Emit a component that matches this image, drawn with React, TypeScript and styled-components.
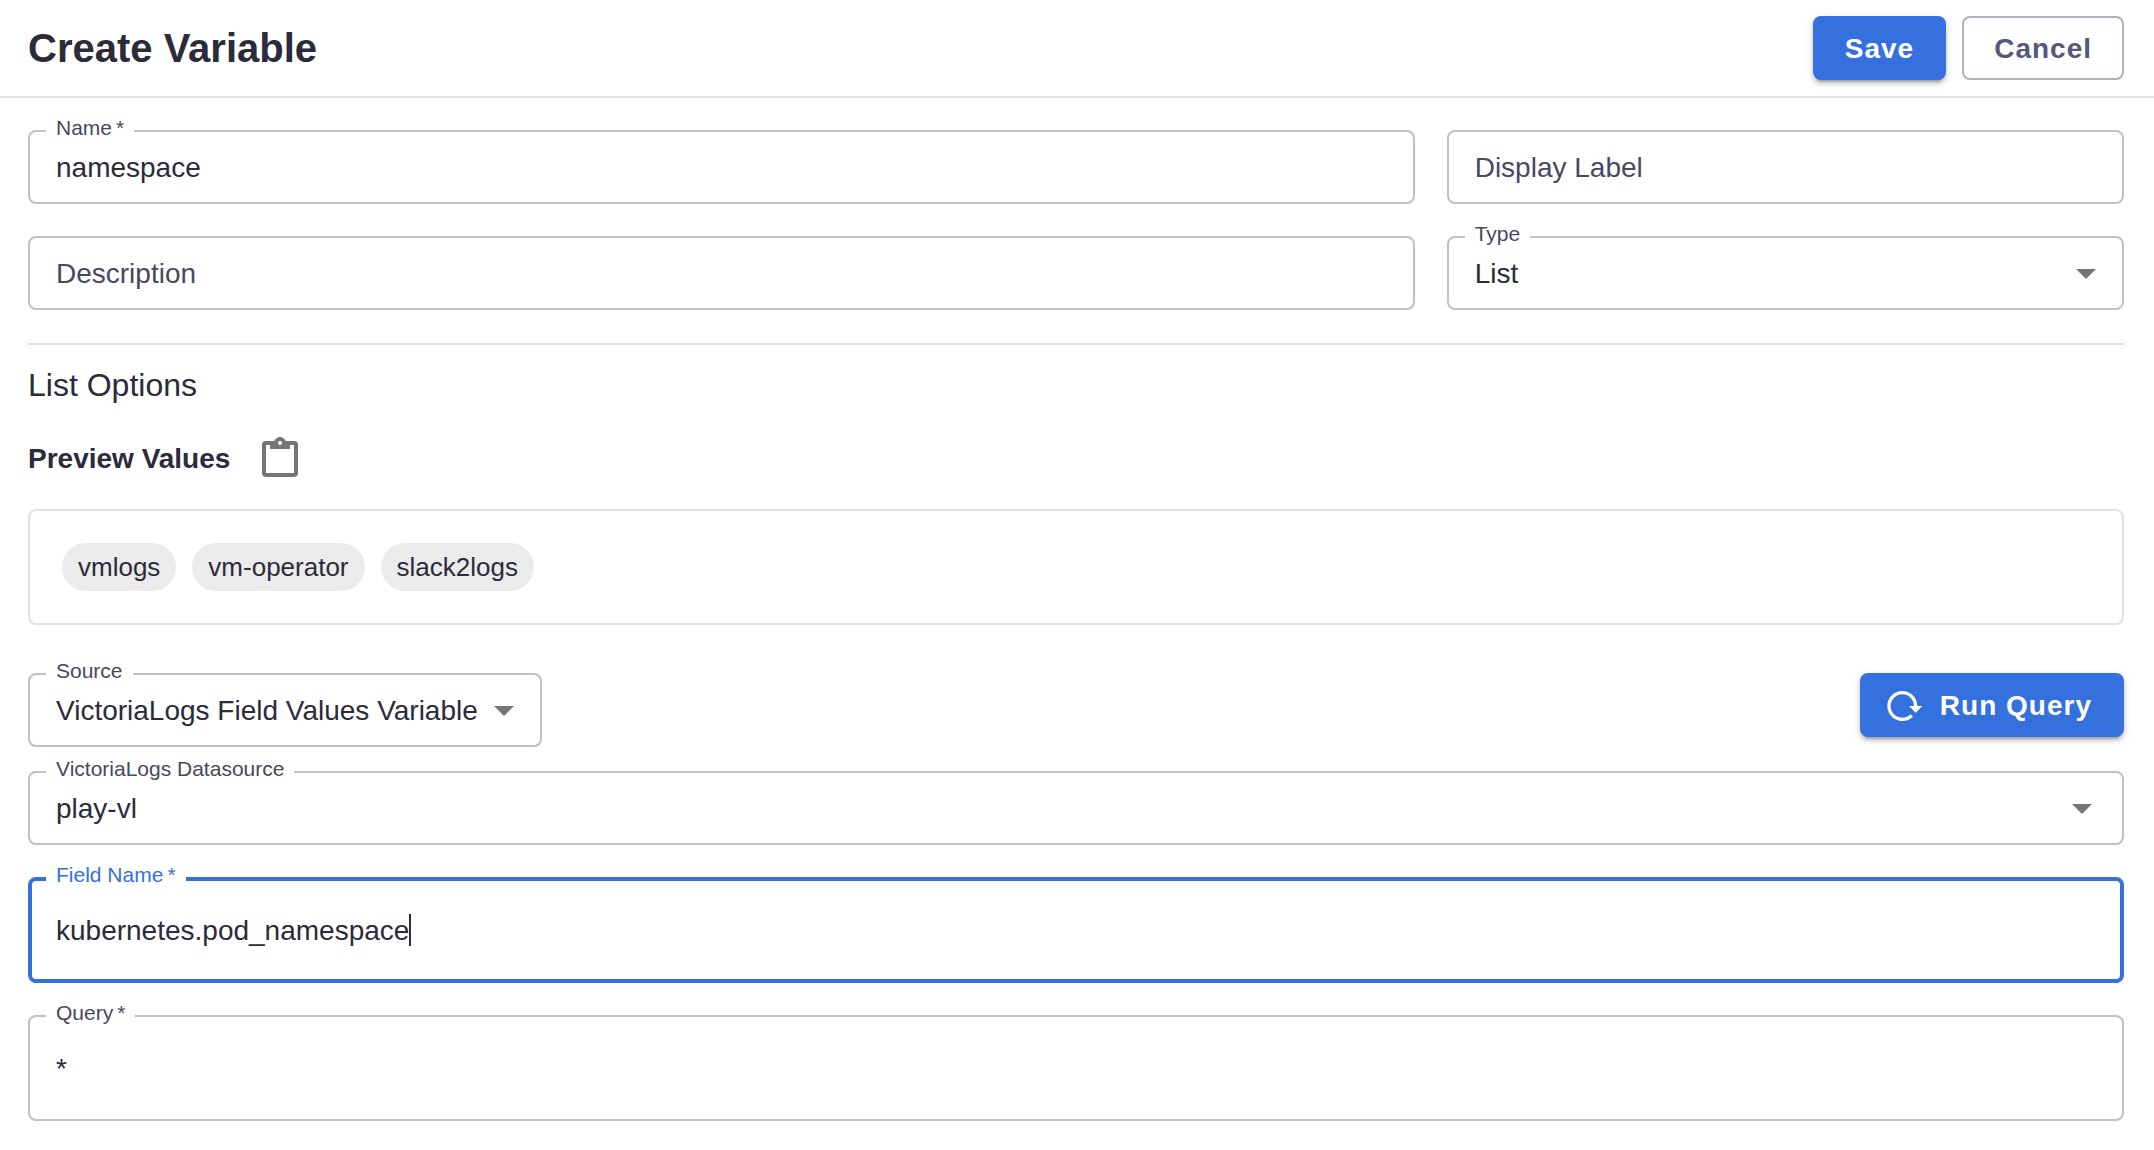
import React, { useId } from 'react';
import styled, { createGlobalStyle } from 'styled-components';

const color = {
  text: '#2b2b3b',
  label: '#484861',
  primary: '#3570df',
  outline: '#c1c1c1',
  divider: '#e2e2e2',
  icon: '#757575',
  chip: '#ebebeb',
  cancelText: '#57577b',
  cancelBorder: '#aeaec6',
};

const GlobalStyle = createGlobalStyle`
  *, *::before, *::after { box-sizing: border-box; }
  body {
    margin: 0;
    background: #fff;
    color: ${color.text};
    font-family: "Liberation Sans", Arial, sans-serif;
    font-size: 28px;
    line-height: 32px;
  }
  button, input, select { font: inherit; color: inherit; }
`;

const Header = styled.header`
  display: flex;
  align-items: center;
  gap: 16px;
  padding: 16px 30px 16px 28px;
  border-bottom: 2px solid ${color.divider};
`;

const Title = styled.h1`
  flex: 1;
  margin: 0;
  font-size: 40px;
  line-height: 48px;
`;

const Button = styled.button<{ $variant: 'contained' | 'outlined' }>`
  display: inline-flex;
  align-items: center;
  gap: 16px;
  height: 64px;
  padding: 2px ${(p) => (p.$variant === 'contained' ? 32 : 30)}px 0;
  border: ${(p) => (p.$variant === 'contained' ? '0' : `2px solid ${color.cancelBorder}`)};
  border-radius: 8px;
  background: ${(p) => (p.$variant === 'contained' ? color.primary : '#fff')};
  color: ${(p) => (p.$variant === 'contained' ? '#fff' : color.cancelText)};
  font-weight: 700;
  letter-spacing: 1px;
  white-space: nowrap;
  box-shadow: ${(p) =>
    p.$variant === 'contained'
      ? '0 6px 2px -4px rgba(0,0,0,.2), 0 4px 4px rgba(0,0,0,.14), 0 2px 10px rgba(0,0,0,.12)'
      : 'none'};
  cursor: pointer;

  svg { margin-left: -8px; }
`;

const Form = styled.form`
  padding: 32px 30px 28px 28px;
`;

const FieldGrid = styled.div`
  display: grid;
  grid-template-columns: repeat(12, 1fr);
  gap: 32px;
`;

const Cell = styled.div<{ $span: number }>`
  grid-column: span ${(p) => p.$span};
`;

const Divider = styled.hr`
  margin: 33px 0 0;
  border: 0;
  border-top: 2px solid ${color.divider};
`;

const SectionTitle = styled.h2`
  margin: 20px 0 0;
  font-size: 32px;
  font-weight: 400;
  line-height: 40px;
`;

const PreviewHeader = styled.div`
  display: flex;
  align-items: center;
  gap: 26px;
  margin-top: 30px;
`;

const PreviewTitle = styled.h3`
  margin: 0;
  font-size: 28px;
  line-height: 32px;
`;

const IconButton = styled.button`
  display: flex;
  padding: 0;
  border: 0;
  background: none;
  color: ${color.icon};
  cursor: pointer;
`;

const ChipList = styled.ul`
  display: flex;
  flex-wrap: wrap;
  gap: 16px;
  margin: 26px 0 48px;
  padding: 32px;
  border: 2px solid ${color.divider};
  border-radius: 8px;
  list-style: none;
`;

const Chip = styled.li`
  padding: 0 16px;
  border-radius: 24px;
  background: ${color.chip};
  font-size: 26px;
  line-height: 48px;
`;

const SourceRow = styled.div`
  display: flex;
  align-items: flex-start;
  justify-content: space-between;
  margin-bottom: 24px;
`;

const Stack = styled.div`
  display: flex;
  flex-direction: column;
  gap: 32px;
`;

const Field = styled.div`
  position: relative;
`;

const Frame = styled.div<{ $tall?: boolean; $focused?: boolean }>`
  display: flex;
  align-items: center;
  height: ${(p) => (p.$tall ? 106 : 74)}px;
  padding: 0 ${(p) => (p.$focused ? 24 : 26)}px;
  border: ${(p) => (p.$focused ? `4px solid ${color.primary}` : `2px solid ${color.outline}`)};
  border-radius: 8px;
`;

const Label = styled.label<{ $focused?: boolean }>`
  position: absolute;
  top: -14px;
  left: 18px;
  padding: 0 10px;
  background: #fff;
  color: ${(p) => (p.$focused ? color.primary : color.label)};
  font-size: 21px;
  line-height: 24px;
`;

const Required = styled.span`
  margin-left: 4px;
`;

const Input = styled.input<{ $fit?: boolean }>`
  ${(p) => (p.$fit ? 'field-sizing: content; caret-color: transparent;' : 'flex: 1; min-width: 0;')}
  height: 40px;
  padding: 2px 0 0;
  border: 0;
  outline: 0;
  background: none;

  &::placeholder { color: ${color.label}; opacity: 1; }
`;

const TextCursor = styled.span`
  width: 2px;
  height: 32px;
  background: ${color.text};
`;

const Select = styled.select<{ $inset: number }>`
  flex: 1;
  height: 70px;
  margin: 0 -26px;
  padding: 2px ${(p) => p.$inset + 34}px 0 26px;
  border: 0;
  outline: 0;
  border-radius: 8px;
  background: none;
  appearance: none;
  cursor: pointer;
`;

const Arrow = styled.svg<{ $inset: number }>`
  position: absolute;
  top: 33px;
  right: ${(p) => p.$inset}px;
  width: 20px;
  height: 10px;
  fill: ${color.icon};
  pointer-events: none;
`;

function TextField(props: {
  label: string;
  value?: string;
  required?: boolean;
  tall?: boolean;
  focused?: boolean;
}) {
  const { label, value, required, tall, focused } = props;
  const id = useId();
  return (
    <Field>
      <Frame $tall={tall} $focused={focused}>
        <Input
          id={id}
          type="text"
          $fit={focused}
          defaultValue={value}
          placeholder={value ? undefined : label}
          aria-label={value ? undefined : label}
          required={required}
        />
        {focused && <TextCursor />}
      </Frame>
      {value && (
        <Label htmlFor={id} $focused={focused}>
          {label}
          {required && <Required>*</Required>}
        </Label>
      )}
    </Field>
  );
}

function SelectField(props: { label: string; value: string; inset?: number }) {
  const { label, value, inset = 28 } = props;
  const id = useId();
  return (
    <Field>
      <Frame>
        <Select id={id} $inset={inset} defaultValue={value}>
          <option>{value}</option>
        </Select>
        <Arrow $inset={inset} viewBox="0 0 20 10" aria-hidden="true">
          <path d="M0 0h20L10 10z" />
        </Arrow>
      </Frame>
      <Label htmlFor={id}>{label}</Label>
    </Field>
  );
}

const ClipboardIcon = () => (
  <svg width="48" height="48" viewBox="0 0 24 24" fill="currentColor" aria-hidden="true">
    <path d="M19,3H14.82C14.4,1.84 13.3,1 12,1C10.7,1 9.6,1.84 9.18,3H5A2,2 0 0,0 3,5V19A2,2 0 0,0 5,21H19A2,2 0 0,0 21,19V5A2,2 0 0,0 19,3M12,3A1,1 0 0,1 13,4A1,1 0 0,1 12,5A1,1 0 0,1 11,4A1,1 0 0,1 12,3M7,7H17V5H19V19H5V5H7V7Z" />
  </svg>
);

const ReloadIcon = () => (
  <svg width="40" height="40" viewBox="0 0 24 24" fill="currentColor" aria-hidden="true">
    <path d="M2 12C2 16.97 6.03 21 11 21C13.39 21 15.68 20.06 17.4 18.4L15.9 16.9C14.63 18.25 12.86 19 11 19C4.76 19 1.64 11.46 6.05 7.05C10.46 2.64 18 5.77 18 12H15L19 16H19.1L23 12H20C20 7.03 15.97 3 11 3C6.03 3 2 7.03 2 12Z" />
  </svg>
);

const previewValues = ['vmlogs', 'vm-operator', 'slack2logs'];

export default function App() {
  return (
    <>
      <GlobalStyle />
      <Header>
        <Title>Create Variable</Title>
        <Button type="submit" form="variable-form" $variant="contained">Save</Button>
        <Button type="button" $variant="outlined">Cancel</Button>
      </Header>
      <Form id="variable-form" onSubmit={(e) => e.preventDefault()}>
        <FieldGrid>
          <Cell $span={8}><TextField label="Name" value="namespace" required /></Cell>
          <Cell $span={4}><TextField label="Display Label" /></Cell>
          <Cell $span={8}><TextField label="Description" /></Cell>
          <Cell $span={4}><SelectField label="Type" value="List" /></Cell>
        </FieldGrid>
        <Divider />
        <SectionTitle>List Options</SectionTitle>
        <PreviewHeader>
          <PreviewTitle>Preview Values</PreviewTitle>
          <IconButton type="button" aria-label="Copy values"><ClipboardIcon /></IconButton>
        </PreviewHeader>
        <ChipList>
          {previewValues.map((v) => <Chip key={v}>{v}</Chip>)}
        </ChipList>
        <SourceRow>
          <SelectField label="Source" value="VictoriaLogs Field Values Variable" />
          <Button type="button" $variant="contained"><ReloadIcon />Run Query</Button>
        </SourceRow>
        <Stack>
          <SelectField label="VictoriaLogs Datasource" value="play-vl" inset={32} />
          <TextField label="Field Name" value="kubernetes.pod_namespace" required tall focused />
          <TextField label="Query" value="*" required tall />
        </Stack>
      </Form>
    </>
  );
}
